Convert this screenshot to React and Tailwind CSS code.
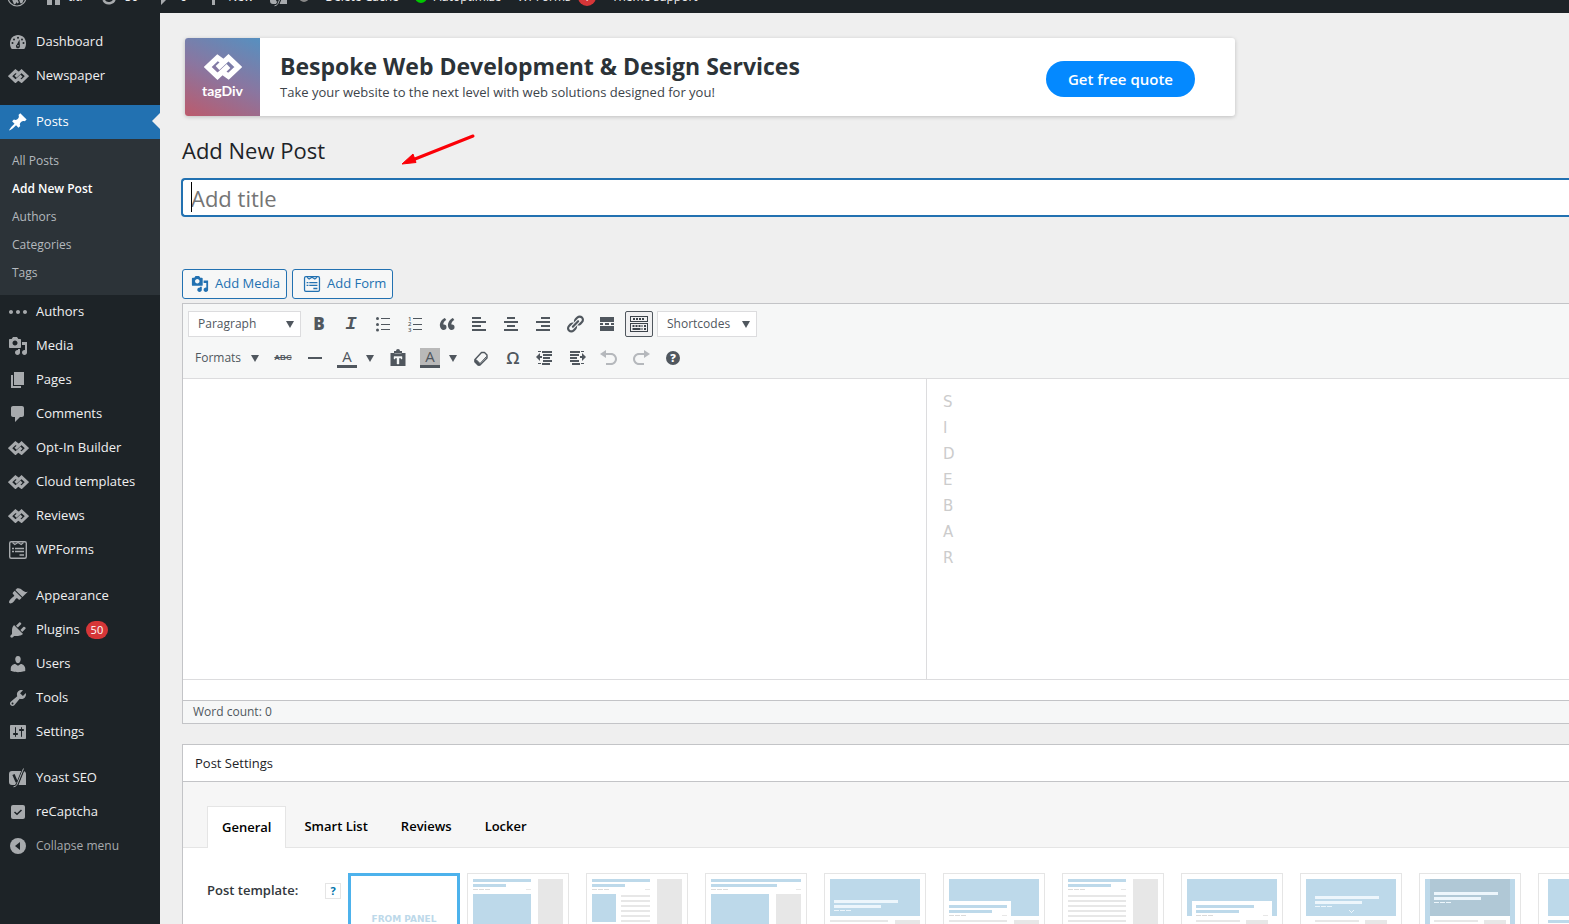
import { Fragment } from 'react';

const paths = {
  post: 'M10.44 3.02l1.82-1.82 6.36 6.35-1.83 1.82c-1.05-.68-2.48-.57-3.41.36l-.75.75c-.92.93-1.04 2.35-.35 3.41l-1.83 1.82-2.41-2.41-2.8 2.79c-.42.42-3.38 2.71-3.8 2.29s1.86-3.39 2.28-3.81l2.79-2.79L4.1 9.36l1.83-1.82c1.05.69 2.48.57 3.4-.36l.75-.75c.93-.92 1.05-2.35.36-3.41z',
  ellipsis: 'M5 10c0 1.1-.9 2-2 2s-2-.9-2-2 .9-2 2-2 2 .9 2 2zm12-2c-1.1 0-2 .9-2 2s.9 2 2 2 2-.9 2-2-.9-2-2-2zm-7 0c-1.1 0-2 .9-2 2s.9 2 2 2 2-.9 2-2-.9-2-2-2z',
  media: 'M13 11V4c0-.55-.45-1-1-1h-1.67L9 1H5L3.67 3H2c-.55 0-1 .45-1 1v7c0 .55.45 1 1 1h10c.55 0 1-.45 1-1zM7 4.5c1.38 0 2.5 1.12 2.5 2.5S8.38 9.5 7 9.5 4.5 8.38 4.5 7 5.62 4.5 7 4.5zM14 6h5v10.5c0 1.38-1.12 2.5-2.5 2.5S14 17.88 14 16.5s1.12-2.5 2.5-2.5c.17 0 .34.02.5.05V9h-3V6zm-4 8.05V13h2v3.5c0 1.38-1.12 2.5-2.5 2.5S7 17.88 7 16.5 8.12 14 9.5 14c.17 0 .34.02.5.05z',
  page: 'M6 15V2h10v13H6zm-1 1h8v2H3V5h2v11z',
  comments: 'M5 2h9c1.1 0 2 .9 2 2v7c0 1.1-.9 2-2 2h-2l-5 5v-5H5c-1.1 0-2-.9-2-2V4c0-1.1.9-2 2-2z',
  appearance: 'M14.48 11.06L7.41 3.99l1.5-1.5c.5-.56 2.3-.47 3.51.32 1.21.8 1.43 1.28 2.91 2.1 1.18.64 2.45 1.26 4.45.85zm-.71.71L6.7 4.7 4.93 6.47c-.39.39-.39 1.02 0 1.41l1.06 1.06c.39.39.39 1.03 0 1.42-.6.6-1.43 1.11-2.21 1.69-.35.26-.7.53-1.01.84C1.43 14.23.4 16.08 1.4 17.07c.99 1 2.84-.03 4.18-1.36.31-.31.58-.66.85-1.02.57-.78 1.08-1.61 1.69-2.21.39-.39 1.02-.39 1.41 0l1.06 1.06c.39.39 1.02.39 1.41 0z',
  plugins: 'M13.11 4.36L9.87 7.6 8 5.73l3.24-3.24c.35-.34 1.05-.2 1.56.32.52.51.66 1.21.31 1.55zm-8 1.77l.91-1.12 9.01 9.01-1.19.84c-.71.71-2.63 1.16-3.82 1.16H6.14L4.9 17.26c-.59.59-1.54.59-2.12 0-.59-.58-.59-1.53 0-2.12l1.24-1.24v-3.88c0-1.13.4-3.19 1.09-3.89zm7.26 3.97l3.24-3.24c.34-.35 1.04-.21 1.55.31.52.51.66 1.21.31 1.55l-3.24 3.25z',
  users: 'M10 9.25c-2.27 0-2.73-3.44-2.73-3.44C7 4.02 7.82 2 9.97 2c2.16 0 2.98 2.02 2.71 3.81 0 0-.41 3.44-2.68 3.44zm0 2.57L12.72 10c2.39 0 4.52 2.33 4.52 4.53v2.49s-3.65 1.13-7.24 1.13c-3.65 0-7.24-1.13-7.24-1.13v-2.49c0-2.25 1.94-4.48 4.47-4.48z',
  tools: 'M16.68 9.77c-1.34 1.34-3.3 1.67-4.95.99l-5.41 6.52c-.99.99-2.59.99-3.58 0s-.99-2.59 0-3.57l6.52-5.42c-.68-1.65-.35-3.61.99-4.95 1.28-1.28 3.12-1.62 4.72-1.06l-2.89 2.89 2.82 2.82 2.86-2.87c.53 1.58.18 3.39-1.08 4.65zM3.81 16.21c.4.39 1.04.39 1.43 0 .4-.4.4-1.04 0-1.43-.39-.4-1.03-.4-1.43 0-.39.39-.39 1.03 0 1.43z',
  settings: 'M18 16V4c0-.55-.45-1-1-1H3c-.55 0-1 .45-1 1v12c0 .55.45 1 1 1h14c.55 0 1-.45 1-1zM8 11h1c.55 0 1 .45 1 1s-.45 1-1 1H8v1.5c0 .28-.22.5-.5.5s-.5-.22-.5-.5V13H6c-.55 0-1-.45-1-1s.45-1 1-1h1V5.5c0-.28.22-.5.5-.5s.5.22.5.5V11zm5-2h-1c-.55 0-1-.45-1-1s.45-1 1-1h1V5.5c0-.28.22-.5.5-.5s.5.22.5.5V7h1c.55 0 1 .45 1 1s-.45 1-1 1h-1v5.5c0 .28-.22.5-.5.5s-.5-.22-.5-.5V9z',
  quote: 'M9.49 13.22c0-.74-.2-1.38-.61-1.9-.62-.78-1.83-.88-2.53-.72-.29-1.65 1.11-3.75 2.92-4.65L7.88 4c-2.73 1.3-5.42 4.28-4.96 8.05C3.21 14.43 4.59 16 6.54 16c.85 0 1.56-.25 2.12-.75s.83-1.18.83-2.03zm8.05 0c0-.74-.2-1.38-.61-1.9-.63-.78-1.83-.88-2.53-.72-.29-1.65 1.11-3.75 2.92-4.65L15.93 4c-2.73 1.3-5.41 4.28-4.95 8.05.29 2.38 1.66 3.95 3.61 3.95.85 0 1.56-.25 2.12-.75s.83-1.18.83-2.03z',
  link: 'M17.74 2.76c1.68 1.69 1.68 4.41 0 6.1l-1.53 1.52c-1.12 1.12-2.7 1.47-4.14 1.09l2.62-2.61.76-.77.76-.76c.84-.84.84-2.2 0-3.04-.84-.85-2.2-.85-3.04 0l-.77.76-3.38 3.38c-.37-1.44-.02-3.02 1.1-4.14l1.52-1.53c1.69-1.68 4.42-1.68 6.1 0zM8.59 13.43l5.34-5.34c.42-.42.42-1.1 0-1.52-.44-.43-1.13-.39-1.53 0l-5.33 5.34c-.42.42-.42 1.1 0 1.52.44.43 1.13.39 1.52 0zm-.76 2.29l4.14-4.15c.38 1.44.03 3.02-1.09 4.14l-1.52 1.53c-1.69 1.68-4.41 1.68-6.1 0-1.68-1.68-1.68-4.42 0-6.1l1.53-1.52c1.12-1.12 2.7-1.47 4.14-1.1l-4.14 4.15c-.85.84-.85 2.2 0 3.05.84.84 2.2.84 3.04 0z',
  undo: 'M12 5H7V2L1 6l6 4V7h5c2.2 0 4 1.8 4 4s-1.8 4-4 4H7v2h5c3.3 0 6-2.7 6-6s-2.7-6-6-6z',
  redo: 'M8 5h5V2l6 4-6 4V7H8c-2.2 0-4 1.8-4 4s1.8 4 4 4h5v2H8c-3.3 0-6-2.7-6-6s2.7-6 6-6z',
  left: 'M12 5V3H3v2h9zm5 4V7H3v2h14zm-5 4v-2H3v2h9zm5 4v-2H3v2h14z',
  center: 'M14 5V3H6v2h8zm3 4V7H3v2h14zm-3 4v-2H6v2h8zm3 4v-2H3v2h14z',
  right: 'M17 5V3H8v2h9zm0 4V7H3v2h14zm0 4v-2H8v2h9zm0 4v-2H3v2h14z',
  more: 'M3 3h14v5H3zM3 9h3v2H3zM8 9h4v2H8zM14 9h3v2h-3zM3 12h14v5H3z',
  hr: 'M3 9h14v2H3z',
  outdent: 'M3 3h3v1H3zM7 3h10v2H7zM8 6h9v2H8zM8 9h7v2H8zM8 12h9v2H8zM3 15h3v1H3zM7 15h8v2H7zM1 9l4-4v3h2v2H5v3z',
  indent: 'M14 3h3v1h-3zM3 3h10v2H3zM3 6h9v2H3zM3 9h7v2H3zM3 12h9v2H3zM14 15h3v1h-3zM5 15h8v2H5zM19 9l-4-4v3h-2v2h2v3z',
  plus: 'M9 3h3v6h6v3h-6v6H9v-6H3V9h6z',
  home: 'M10 2l8 6h-1v10h-5v-5H9v5H4V8H2z',
};

function Icon({ name, size = 20 }) {
  return (
    <svg viewBox="0 0 20 20" width={size} height={size} fill="currentColor" fillRule="evenodd" aria-hidden="true">
      <path d={paths[name]} />
    </svg>
  );
}

function TagDiv({ width = 21 }) {
  return (
    <svg viewBox="0 0 38 26" width={width} fill="none" stroke="currentColor" strokeWidth="5.400" strokeLinejoin="miter" aria-hidden="true">
      <path d="M20 8.500L13.500 3.700L3.700 13l9.800 9.300L24.500 12" />
      <path d="M18 17.500L24.500 22.300L34.300 13L24.500 3.700L13.500 14" />
    </svg>
  );
}

function Gauge() {
  return (
    <svg viewBox="0 0 20 20" width="20" height="20" fill="currentColor" aria-hidden="true">
      <path d="M3.760 17h12.480C17.580 15.370 18 13.270 18 11c0-4.410-3.580-8-8-8s-8 3.590-8 8c0 2.270.42 4.370 1.760 6z" />
      <g fill="#1d2327">
        <circle cx="10" cy="5.800" r="1" />
        <circle cx="6" cy="7.500" r="1" />
        <circle cx="14" cy="7.500" r="1" />
        <circle cx="4.500" cy="11" r="1" />
        <circle cx="15.500" cy="11" r="1" />
        <path d="M11.500 7.500l.4 6.300a2 2 0 1 1-3-1.200z" />
      </g>
      <circle cx="10" cy="13.800" r=".8" />
    </svg>
  );
}

function FormIcon({ size = 20 }) {
  return (
    <svg viewBox="0 0 20 20" width={size} height={size} fill="none" stroke="currentColor" aria-hidden="true">
      <rect x="1.700" y="1.700" width="16.600" height="16.600" rx="1.500" strokeWidth="1.400" />
      <path d="M4.500 2.500l2.300 2L10 2.500l3.200 2l2.300-2" strokeWidth="1.200" />
      <path d="M4 8.500h2M7 8.500h9M4 11.500h2M7 11.500h9M11.500 15H16" strokeWidth="1.400" />
    </svg>
  );
}

function Yoast() {
  return (
    <svg viewBox="0 0 20 20" width="20" height="20" fill="none" aria-hidden="true">
      <path d="M4 3h9.500l-4.500 14H4a3 3 0 0 1-3-3V6a3 3 0 0 1 3-3zM16 3.200c1.300.3 2 1.400 2 2.800v11H10.500z" fill="currentColor" />
      <path d="M5.500 6.500l3.200 7.500M15.500.5L9.600 15c-.7 2-1.600 3.600-4.100 3.800" stroke="#1d2327" strokeWidth="2.400" />
      <path d="M15.500.5L9.600 15c-.7 2-1.600 3.600-4.100 3.800" stroke="currentColor" strokeWidth="1" />
    </svg>
  );
}

function Captcha() {
  return (
    <svg viewBox="0 0 20 20" width="20" height="20" fill="none" aria-hidden="true">
      <rect x="3" y="3" width="14" height="14" rx="2" fill="currentColor" />
      <path d="M6.500 10l2.500 2.300L13.500 8" stroke="#1d2327" strokeWidth="1.500" />
    </svg>
  );
}

function Collapse() {
  return (
    <svg viewBox="0 0 20 20" width="20" height="20" aria-hidden="true">
      <circle cx="10" cy="10" r="8" fill="currentColor" />
      <path d="M12 6v8l-5-4z" fill="#1d2327" />
    </svg>
  );
}

function WpLogo() {
  return (
    <svg viewBox="0 0 20 20" width="20" height="20" fill="none" stroke="currentColor" aria-hidden="true">
      <circle cx="10" cy="10" r="9" strokeWidth="1.200" />
      <path d="M3.500 6.500L8 17M6.500 6.500L11 16M10.500 7L7.800 16.500M11 6.500l3.300 9.500M16.500 7c.5 2-.8 5-2.200 9" strokeWidth="2" />
    </svg>
  );
}

function Updates() {
  return (
    <svg viewBox="0 0 20 20" width="20" height="20" fill="none" stroke="currentColor" strokeWidth="2.500" aria-hidden="true">
      <path d="M15.500 7A6 6 0 0 0 4.200 9M4.500 13a6 6 0 0 0 11.300-2" />
    </svg>
  );
}

const menu = [
  [
    { label: 'Dashboard', icon: <Gauge /> },
    { label: 'Newspaper', icon: <TagDiv /> },
  ],
  [
    { label: 'Posts', icon: <Icon name="post" />, active: true },
    { label: 'Authors', icon: <Icon name="ellipsis" /> },
    { label: 'Media', icon: <Icon name="media" /> },
    { label: 'Pages', icon: <Icon name="page" /> },
    { label: 'Comments', icon: <Icon name="comments" /> },
    { label: 'Opt-In Builder', icon: <TagDiv /> },
    { label: 'Cloud templates', icon: <TagDiv /> },
    { label: 'Reviews', icon: <TagDiv /> },
    { label: 'WPForms', icon: <FormIcon /> },
  ],
  [
    { label: 'Appearance', icon: <Icon name="appearance" /> },
    { label: 'Plugins', icon: <Icon name="plugins" />, count: 50 },
    { label: 'Users', icon: <Icon name="users" /> },
    { label: 'Tools', icon: <Icon name="tools" /> },
    { label: 'Settings', icon: <Icon name="settings" /> },
  ],
  [
    { label: 'Yoast SEO', icon: <Yoast /> },
    { label: 'reCaptcha', icon: <Captcha /> },
  ],
];

const submenu = ['All Posts', 'Add New Post', 'Authors', 'Categories', 'Tags'];

function MenuItem({ item }) {
  return (
    <a
      href="#"
      className={`relative flex h-[34px] items-center text-[13px] ${item.active ? 'bg-[#2271b1] text-white' : 'text-[#f0f0f1]'}`}
    >
      <span className={`flex w-9 justify-center ${item.active ? 'text-white' : 'text-[#a7aaad]'}`}>{item.icon}</span>
      {item.label}
      {item.count && (
        <span className="ml-[6px] flex h-[18px] items-center rounded-full bg-[#d63638] px-[5px] text-[11px] text-white">{item.count}</span>
      )}
      {item.active && (
        <span className="absolute top-2 right-0 border-y-8 border-r-8 border-y-transparent border-r-[#efefef]" />
      )}
    </a>
  );
}

function Sidebar() {
  return (
    <nav className="w-40 shrink-0 bg-[#1d2327] pt-3">
      {menu.map((group, i) => (
        <div key={i} className="mb-3">
          {group.map((item) => (
            <Fragment key={item.label}>
              <MenuItem item={item} />
              {item.active && (
                <div className="bg-[#2c3338] py-2">
                  {submenu.map((label) => (
                    <a
                      key={label}
                      href="#"
                      className={`flex h-7 items-center px-3 text-xs ${label === 'Add New Post' ? 'font-semibold text-white' : 'text-[#b4b9be]'}`}
                    >
                      {label}
                    </a>
                  ))}
                </div>
              )}
            </Fragment>
          ))}
          {i === menu.length - 1 && (
            <button type="button" className="flex h-[34px] w-full items-center text-xs text-[#a7aaad]">
              <span className="flex w-9 justify-center"><Collapse /></span>
              Collapse menu
            </button>
          )}
        </div>
      ))}
    </nav>
  );
}

function AdminBar() {
  return (
    <header className="flex h-[13px] shrink-0 items-end overflow-hidden bg-[#1d2327] text-[#f0f0f1]">
      <div className="flex h-8 items-center gap-4 px-[7px] text-xs whitespace-nowrap [&_svg]:text-[#a7aaad]">
        <a href="#" aria-label="About WordPress"><WpLogo /></a>
        <a href="#" className="flex items-center gap-[5px]"><Icon name="home" />titi</a>
        <a href="#" className="flex items-center gap-[6px]"><Updates />50</a>
        <a href="#" className="flex items-center gap-[6px]"><Icon name="comments" />0</a>
        <a href="#" className="flex items-center gap-[5px]"><Icon name="plus" />New</a>
        <a href="#" aria-label="Yoast SEO" className="flex items-center gap-[10px]">
          <Yoast />
          <span className="size-[10px] rounded-full bg-[#888888]" />
        </a>
        <a href="#">Delete Cache</a>
        <a href="#" className="flex items-center gap-[7px]">
          <span className="size-3 rounded-full border-[3px] border-[#00c800]" />
          Autoptimize
        </a>
        <a href="#" className="flex items-center gap-[7px]">
          WPForms
          <span className="flex size-[18px] items-center justify-center rounded-full bg-[#d63638] text-[11px] text-white">1</span>
        </a>
        <a href="#">Theme support</a>
      </div>
    </header>
  );
}

function Banner() {
  return (
    <section className="ml-[3px] flex w-full max-w-[1050px] overflow-hidden rounded-[3px] bg-white shadow-[0_1px_4px_rgba(0,0,0,0.2)]">
      <div className="flex h-[78px] w-[75px] flex-col items-center justify-center gap-[2px] bg-[linear-gradient(205deg,#5690c0_0%,#8a76a0_50%,#bc5a6c_100%)] text-white">
        <TagDiv width={38} />
        <span className="font-['Lato'] text-sm leading-[18px] font-bold">tagDiv</span>
      </div>
      <div className="flex flex-1 items-center justify-between pt-1 pr-10 pl-5">
        <div className="pb-[6px]">
          <h2 className="text-[23px] leading-8 font-bold text-[#2c3338]">Bespoke Web Development &amp; Design Services</h2>
          <p className="text-[13px] leading-5 text-[#3c434a]">Take your website to the next level with web solutions designed for you!</p>
        </div>
        <a href="#" className="flex h-9 items-center rounded-full bg-[#0489ff] px-[22px] text-[15px] font-semibold text-white">Get free quote</a>
      </div>
    </section>
  );
}

function Caret({ className = '' }) {
  return (
    <svg viewBox="0 0 8 7" width="8" height="7" className={className} aria-hidden="true">
      <path d="M0 0h8L4 7z" fill="#50575e" />
    </svg>
  );
}

function Dropdown({ label, value, className, caretClass }) {
  return (
    <div className="relative flex items-center">
      <select aria-label={label} className={`h-[26px] appearance-none text-xs text-[#50575e] ${className}`}>
        <option>{value}</option>
      </select>
      <Caret className={`pointer-events-none absolute ${caretClass}`} />
    </div>
  );
}

function Tool({ label, children, className = '' }) {
  return (
    <button type="button" aria-label={label} className={`flex h-[26px] w-8 items-center justify-center ${className}`}>
      {children}
    </button>
  );
}

function BulletList() {
  return (
    <svg viewBox="0 0 20 20" width="20" height="20" fill="currentColor" aria-hidden="true">
      <circle cx="4.500" cy="4.500" r="1.500" />
      <circle cx="4.500" cy="10.500" r="1.500" />
      <circle cx="4.500" cy="16" r="1.500" />
      <path d="M8 4h9v1H8zM8 10h9v1H8zM8 15h9v1H8z" />
    </svg>
  );
}

function NumberList() {
  return (
    <svg viewBox="0 0 20 20" width="20" height="20" fill="currentColor" aria-hidden="true">
      <g fontSize="6" fontWeight="600" fontFamily="Open Sans, sans-serif">
        <text x="3" y="7">1</text>
        <text x="3" y="12">2</text>
        <text x="3" y="18">3</text>
      </g>
      <path d="M8 4h9v1H8zM8 10h9v1H8zM8 15h9v1H8z" />
    </svg>
  );
}

function Keyboard() {
  return (
    <svg viewBox="0 0 20 18" width="20" height="18" fill="none" stroke="currentColor" aria-hidden="true">
      <rect x="1.500" y="1.500" width="17" height="5" />
      <rect x="1.500" y="8.500" width="17" height="8" />
      <path d="M4 4h2M7 4h2M10 4h2M13 4h2M3.500 11h2M6.500 11h2M9.500 11h2M12.500 11h1M15 11h2M3.500 14h8M12.500 14h1M15 14h2" strokeWidth="2" />
    </svg>
  );
}

function Paste() {
  return (
    <svg viewBox="0 0 20 20" width="20" height="20" aria-hidden="true">
      <path d="M6 3h2a2 2 0 0 1 4 0h2v2h3.500v13h-15V5H6z" fill="currentColor" />
      <path d="M6.500 5.500h7M6 8.500h8v2.500h-1v-1h-2v6H9v-6H7v1H6z" fill="#f6f7f7" stroke="#f6f7f7" strokeWidth=".4" />
    </svg>
  );
}

function Eraser() {
  return (
    <svg viewBox="0 0 20 20" width="20" height="20" fill="none" stroke="currentColor" strokeLinejoin="round" aria-hidden="true">
      <path d="M10.500 4.500h3L16 7v3l-7 7H7l-3-3v-2.500z" strokeWidth="1.400" />
      <path d="M4 11.500v2.500l3 3h2v-1.500l-4-4z" fill="currentColor" />
      <path d="M9 15.500l6.500-7" strokeWidth="1" />
    </svg>
  );
}

function Toolbar() {
  return (
    <div className="border-b border-[#dcdcde] bg-[#f6f7f7] py-[7px] pl-[5px] text-[#50575e]">
      <div className="flex items-center">
        <Dropdown label="Block format" value="Paragraph" className="w-[113px] border border-[#dcdcde] bg-white pl-[9px]" caretClass="right-[7px]" />
        <span className="w-[2px]" />
        <Tool label="Bold" className="text-[17px] font-extrabold">B</Tool>
        <Tool label="Italic" className="font-['Liberation_Mono'] text-[19px] font-bold italic">I</Tool>
        <Tool label="Bulleted list"><BulletList /></Tool>
        <Tool label="Numbered list"><NumberList /></Tool>
        <Tool label="Blockquote"><Icon name="quote" /></Tool>
        <Tool label="Align left"><Icon name="left" /></Tool>
        <Tool label="Align center"><Icon name="center" /></Tool>
        <Tool label="Align right"><Icon name="right" /></Tool>
        <Tool label="Insert link"><Icon name="link" /></Tool>
        <Tool label="Read more"><Icon name="more" /></Tool>
        <button type="button" aria-label="Toolbar toggle" className="mx-[2px] flex h-[26px] w-7 items-center justify-center rounded-xs border border-[#50575e] bg-[#f0f0f1] text-[#3c434a]">
          <Keyboard />
        </button>
        <span className="w-[2px]" />
        <Dropdown label="Shortcodes" value="Shortcodes" className="w-[100px] border border-[#dcdcde] bg-white pl-[9px]" caretClass="right-[7px]" />
      </div>
      <div className="mt-2 flex items-center">
        <Dropdown label="Formats" value="Formats" className="w-[79px] pl-[7px]" caretClass="right-2" />
        <Tool label="Strikethrough" className="font-['Liberation_Sans'] text-[8px] font-bold line-through">ABC</Tool>
        <Tool label="Horizontal line"><Icon name="hr" /></Tool>
        <Tool label="Text color">
          <span className="w-5 border-b-[3px] border-current text-[15px] leading-[17px]">A</span>
        </Tool>
        <button type="button" aria-label="Text color options" className="h-[26px] w-[19px] pl-[3px]"><Caret /></button>
        <Tool label="Paste as text"><Paste /></Tool>
        <Tool label="Background color">
          <span className="w-5 border-b-[3px] border-current bg-[#b9b9b9] text-[15px] leading-[17px]">A</span>
        </Tool>
        <button type="button" aria-label="Background color options" className="h-[26px] w-[19px] pl-[3px]"><Caret /></button>
        <Tool label="Clear formatting"><Eraser /></Tool>
        <Tool label="Special character" className="text-[17px] font-semibold">Ω</Tool>
        <Tool label="Decrease indent"><Icon name="outdent" /></Tool>
        <Tool label="Increase indent"><Icon name="indent" /></Tool>
        <Tool label="Undo" className="text-[#b5b8bc]"><Icon name="undo" /></Tool>
        <Tool label="Redo" className="text-[#b5b8bc]"><Icon name="redo" /></Tool>
        <Tool label="Keyboard shortcuts">
          <span className="flex size-[14px] items-center justify-center rounded-full bg-[#50575e] text-[11px] font-extrabold text-white">?</span>
        </Tool>
      </div>
    </div>
  );
}

function Editor() {
  return (
    <section className="mt-1 border-t border-l border-[#c3c4c7] bg-white">
      <Toolbar />
      <div className="flex h-[300px]">
        <div className="w-[743px] shrink-0" />
        <div className="flex flex-1 flex-col border-l border-[#dcdcde] pt-[10px] pl-4 font-['DejaVu_Sans'] text-[15px] leading-[26px] text-[#cccccc]">
          {'SIDEBAR'.split('').map((letter) => <span key={letter}>{letter}</span>)}
        </div>
      </div>
      <div className="h-[21px] border-t border-[#dcdcde]" />
      <div className="border-y border-[#c3c4c7] bg-[#f6f7f7] px-[10px] text-xs leading-[22px] text-[#50575e]">Word count: 0</div>
    </section>
  );
}

const BLUE = '#bdd9ea';
const GRAY = '#e7e7e7';
const PALE = '#edf6fc';
const DARK = '#b0c8d6';

// meta row: three dashes starting at x
const meta = (x, y, color = '#dadada') => [[x, y, 5, 1, color], [x + 6, y, 5, 1, color], [x + 12, y, 5, 1, color]];
const lines = (x, w) => [22, 27, 32, 37, 42, 47, 52].map((y) => [x, y, w, 2, GRAY]);

// each entry is a list of [x, y, width, height, color]
const templates = [
  [[6, 6, 58, 3, BLUE], [6, 11, 33, 3, BLUE], ...meta(6, 16), [59, 16, 5, 1, GRAY], [6, 21, 58, 50, BLUE], [71, 6, 25, 110, GRAY]],
  [[6, 6, 58, 3, BLUE], [6, 11, 33, 3, BLUE], ...meta(6, 16), [59, 16, 5, 1, GRAY], [6, 21, 24, 28, BLUE], ...lines(35, 29), [71, 6, 25, 110, GRAY]],
  [[6, 6, 90, 3, BLUE], [6, 11, 66, 3, BLUE], ...meta(6, 16), [91, 16, 5, 1, GRAY], [6, 21, 58, 50, BLUE], [71, 21, 25, 95, GRAY]],
  [[6, 6, 90, 37, BLUE], [10, 27, 64, 3, PALE], [10, 32, 47, 3, PALE], ...meta(10, 37, PALE), [6, 47, 58, 2, GRAY], [71, 47, 25, 70, GRAY]],
  [[6, 6, 90, 37, BLUE], [6, 28, 62, 15, '#fff'], [6, 32, 58, 3, BLUE], [6, 37, 43, 3, BLUE], ...meta(6, 42), [59, 42, 5, 1, GRAY], [6, 47, 58, 2, GRAY], [71, 47, 25, 70, GRAY]],
  [[6, 6, 58, 3, BLUE], [6, 11, 43, 3, BLUE], ...meta(6, 16), [59, 16, 5, 1, GRAY], ...lines(6, 58), [71, 6, 25, 110, GRAY]],
  [[6, 6, 90, 37, BLUE], [11, 28, 80, 15, '#fff'], [15, 32, 58, 3, BLUE], [15, 37, 43, 3, BLUE], ...meta(15, 42), [82, 42, 5, 1, GRAY], [15, 47, 44, 2, GRAY], [65, 47, 22, 70, GRAY]],
  [[6, 6, 90, 37, BLUE], [15, 23, 64, 3, PALE], [15, 28, 47, 3, PALE], ...meta(15, 33, PALE), [49, 37, 1, 1, PALE], [50, 38, 1, 1, PALE], [51, 39, 1, 1, PALE], [52, 38, 1, 1, PALE], [53, 37, 1, 1, PALE], [15, 47, 44, 2, GRAY], [65, 47, 22, 70, GRAY]],
  [[6, 6, 90, 110, BLUE], [11, 6, 80, 37, DARK], [15, 19, 64, 3, PALE], [15, 24, 47, 3, PALE], ...meta(15, 29, PALE), [11, 43, 80, 73, '#fff'], [15, 47, 44, 2, GRAY], [65, 47, 22, 70, GRAY]],
  [[10, 6, 82, 37, BLUE], [10, 47, 58, 3, BLUE]],
];

function PostSettings() {
  return (
    <section className="mt-5 border-t border-l border-[#c3c4c7] bg-white">
      <h2 className="border-b border-[#c3c4c7] px-3 text-[13px] leading-9 font-medium text-[#1d2327]">Post Settings</h2>
      <div className="flex items-end border-b border-[#e5e5e5] bg-[#f6f6f6] pt-6 pl-6 text-[13px] font-semibold text-black">
        <button type="button" className="-mb-px h-[42px] border border-b-0 border-[#e5e5e5] bg-white px-[14px]">General</button>
        <button type="button" className="h-[41px] pr-4 pl-[18px]">Smart List</button>
        <button type="button" className="h-[41px] px-[17px]">Reviews</button>
        <button type="button" className="h-[41px] px-4">Locker</button>
      </div>
      <div className="flex pt-[25px] pl-6">
        <span className="w-[118px] shrink-0 pt-[7px] text-[13px] leading-5 font-semibold text-[#32373c]">Post template:</span>
        <button type="button" aria-label="Help" className="mt-[10px] mr-[7px] flex size-4 shrink-0 items-center justify-center border border-[#e5e5e5] text-[11px] font-bold text-[#0073aa]">?</button>
        <button type="button" className="mr-[7px] flex h-[134px] w-28 shrink-0 justify-center border-[3px] border-[#4db2ec] pt-9 font-['DejaVu_Sans'] text-[9px] leading-[14px] font-bold text-[#bdd9ea]">
          FROM PANEL
        </button>
        <div className="flex gap-[17px]">
          {templates.map((shapes, i) => (
            <button key={i} type="button" aria-label={`Template ${i + 1}`} className="h-[124px] shrink-0">
              <svg viewBox="0 0 102 124" width="102" height="124" shapeRendering="crispEdges">
                <rect x="0.500" y="0.500" width="101" height="123" fill="#fff" stroke="#e5e5e5" />
                {shapes.map(([x, y, w, h, fill], j) => (
                  <rect key={j} x={x} y={y} width={w} height={h} fill={fill} />
                ))}
              </svg>
            </button>
          ))}
        </div>
      </div>
    </section>
  );
}

export default function App() {
  return (
    <div className="flex h-screen flex-col overflow-hidden bg-[#efefef] font-['Open_Sans',sans-serif]">
      <AdminBar />
      <div className="flex min-h-0 flex-1">
        <Sidebar />
        <main className="min-w-0 flex-1 overflow-hidden pt-[25px] pl-[22px]">
          <Banner />
          <div className="relative flex">
            <h1 className="mt-[18px] text-[22px] leading-8 text-[#1d2327]">Add New Post</h1>
            <svg viewBox="0 0 74 32" width="74" height="32" className="absolute top-[18px] left-[219px]" aria-hidden="true">
              <path d="M72 2L14 25" stroke="#fb0007" strokeWidth="3" strokeLinecap="round" />
              <path d="M1 30L12 20l3 8.500z" fill="#fb0007" stroke="#fb0007" />
            </svg>
          </div>
          <div className="relative mt-3 -ml-px">
            <input
              type="text"
              aria-label="Add title"
              placeholder="Add title"
              className="block h-[39px] w-full rounded-l border-2 border-r-0 border-[#2271b1] bg-white px-2 text-[22px] caret-transparent outline-none placeholder:text-[#757575]"
            />
            <span className="absolute top-1 left-[10px] h-[30px] w-px bg-black" />
          </div>
          <div className="mt-[52px] flex gap-[5px] text-[13px] text-[#2271b1]">
            <button type="button" className="flex h-[30px] items-center gap-[6px] rounded-[3px] border border-[#2271b1] bg-[#f6f7f7] pr-[6px] pl-2">
              <Icon name="media" size={18} />
              Add Media
            </button>
            <button type="button" className="flex h-[30px] items-center gap-[6px] rounded-[3px] border border-[#2271b1] bg-[#f6f7f7] pr-[6px] pl-[10px]">
              <FormIcon size={18} />
              Add Form
            </button>
          </div>
          <Editor />
          <PostSettings />
        </main>
      </div>
    </div>
  );
}
